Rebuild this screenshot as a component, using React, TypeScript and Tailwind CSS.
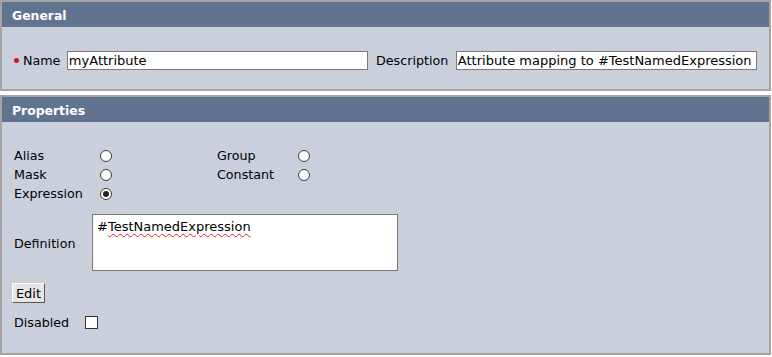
import React from "react";

function Radio({ checked }: { checked?: boolean }) {
  return (
    <span className="flex h-[12px] w-[12px] items-center justify-center rounded-full border border-[#3c3c3c] bg-white">
      {checked && <span className="h-[6px] w-[6px] rounded-full bg-[#222]" />}
    </span>
  );
}

function Panel({ title, children }: { title: string; children: React.ReactNode }) {
  return (
    <section className="mr-[1px] border-2 border-[#a4a4a4]">
      <div className="flex h-[25px] items-center bg-[#627390] px-[10px] pt-[3px] text-[12.4px] font-bold text-white">
        {title}
      </div>
      {children}
    </section>
  );
}

export default function App() {
  return (
    <div className="h-[357px] w-[772px] bg-white font-['DejaVu_Sans',sans-serif] text-[12.7px] text-black">
      <Panel title="General">
        <div className="flex h-[62px] items-center bg-[#c9d0db] px-[12px] pt-[5px]">
          <span className="mr-[4px] h-[5px] w-[5px] rounded-full bg-[#e0101a]" />
          <span className="w-[44px]">Name</span>
          <div className="h-[19px] w-[302px] border border-[#7a7a7a] bg-white pl-[1px] text-[13px] leading-[17px]">
            myAttribute
          </div>
          <span className="ml-[8px] w-[80px]">Description</span>
          <div className="h-[19px] w-[302px] overflow-hidden whitespace-nowrap border border-[#7a7a7a] bg-white pl-[1px] text-[13px] leading-[17px]">
            Attribute mapping to #TestNamedExpression
          </div>
        </div>
      </Panel>

      <div className="mt-[4px]">
        <Panel title="Properties">
          <div className="h-[231px] bg-[#c9d0db] px-[12px] pt-[24px]">
            <div className="grid grid-cols-[86px_117px_81px_12px] auto-rows-[19px] items-center">
              <span>Alias</span>
              <Radio />
              <span>Group</span>
              <Radio />
              <span>Mask</span>
              <Radio />
              <span>Constant</span>
              <Radio />
              <span>Expression</span>
              <Radio checked />
            </div>

            <div className="mt-[11px] flex items-center">
              <span className="w-[78px] pt-[3px]">Definition</span>
              <div className="h-[57px] w-[306px] border border-[#7a7a7a] bg-white px-[4px] pt-[3px] text-[13px] leading-[17px]">
                #
                <span className="underline decoration-[#e0202a] decoration-wavy decoration-1 underline-offset-2">
                  TestNamedExpression
                </span>
              </div>
            </div>

            <button className="-ml-[2px] mt-[12px] flex h-[20px] w-[33px] items-center justify-center border border-b-[#5a5a5a] border-l-white border-r-[#5a5a5a] border-t-white bg-[#e6e6e6] pt-[1px] text-[13px] leading-none">
              Edit
            </button>

            <div className="mt-[10px] flex items-center">
              <span className="w-[71px]">Disabled</span>
              <span className="h-[13px] w-[13px] border border-[#333] bg-white" />
            </div>
          </div>
        </Panel>
      </div>
    </div>
  );
}
